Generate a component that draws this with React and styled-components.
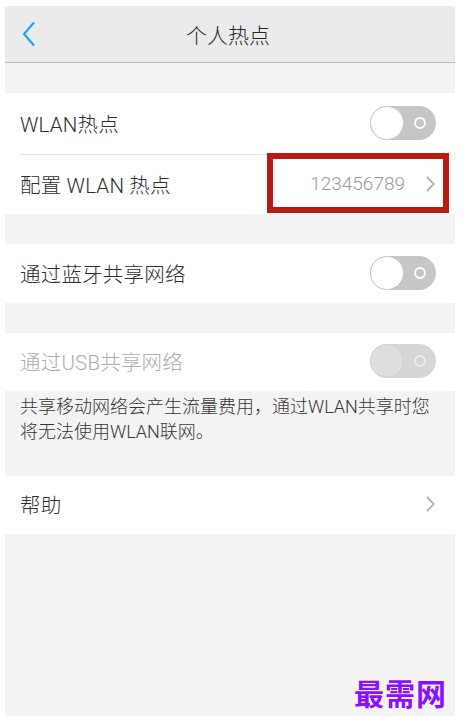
import styled, { createGlobalStyle } from 'styled-components';

const GlobalStyle = createGlobalStyle`
  body {
    margin: 0;
    background: #ffffff;
    font-family: "Roboto", "Noto Sans CJK SC", sans-serif;
    font-weight: 300;
  }
`;

const Screen = styled.div`
  position: relative;
  margin: 6px 0 0 5px;
  width: 450px;
  height: 710px;
  background: #f3f3f3;
  overflow: hidden;
`;

const Header = styled.header`
  box-sizing: border-box;
  height: 57px;
  display: grid;
  grid-template-columns: 60px 1fr 60px;
  align-items: center;
  background: #ebebeb;
  border-bottom: 1.5px solid #b9b9b9;
`;

const BackButton = styled.button`
  border: 0;
  background: none;
  padding: 0 0 0 17px;
  display: flex;
  align-items: center;
  height: 100%;
`;

const Title = styled.h1`
  margin: 0 4px 0 0;
  text-align: center;
  font-size: 21px;
  font-weight: 300;
  color: #262626;
`;

const Gap = styled.div`
  height: ${p => p.$h}px;
`;

const Group = styled.section`
  background: #ffffff;
`;

const Row = styled.div`
  position: relative;
  box-sizing: border-box;
  height: ${p => p.$h || 59}px;
  display: flex;
  align-items: center;
  justify-content: space-between;
  padding: 0 19px 2px 15px;
  ${p => p.$divider && `
    &::after {
      content: "";
      position: absolute;
      left: 15px;
      right: 0;
      bottom: 0;
      height: 1px;
      background: #e3e3e3;
    }
  `}
`;

const Label = styled.span`
  font-size: 20.5px;
  font-weight: 300;
  color: ${p => (p.$muted ? '#adadad' : '#2e2e2e')};
  letter-spacing: 0.2px;
`;

const Trail = styled.div`
  display: flex;
  align-items: center;
  gap: 20px;
`;

const Value = styled.span`
  font-size: 19px;
  color: #9a9a9a;
`;

const Highlight = styled.div`
  position: absolute;
  left: 262px;
  top: -2px;
  width: 182px;
  height: 60px;
  box-sizing: border-box;
  border: 6px solid #bb1a10;
`;

const Track = styled.div`
  position: relative;
  box-sizing: border-box;
  width: 66px;
  height: 34px;
  border-radius: 17px;
  background: ${p => (p.$disabled ? '#d6d6d6' : '#c6c6c6')};
`;

const Knob = styled.div`
  position: absolute;
  left: 0;
  top: 0;
  box-sizing: border-box;
  width: 34px;
  height: 34px;
  border-radius: 50%;
  background: ${p => (p.$disabled ? '#dedede' : '#ffffff')};
  border: 1px solid ${p => (p.$disabled ? '#d0d0d0' : '#c9c9c9')};
`;

const Ring = styled.div`
  position: absolute;
  right: 10px;
  top: 11px;
  box-sizing: border-box;
  width: 12px;
  height: 12px;
  border-radius: 50%;
  border: 2.5px solid ${p => (p.$disabled ? '#ececec' : '#ffffff')};
`;

const Note = styled.p`
  box-sizing: border-box;
  margin: 0;
  height: 85px;
  padding: 3px 22px 0 15px;
  font-size: 18px;
  line-height: 25px;
  color: #363636;
`;

const Watermark = styled.div`
  position: absolute;
  right: 8px;
  bottom: 2px;
  font-family: "Noto Sans CJK SC", sans-serif;
  font-size: 30px;
  font-weight: 700;
  color: #8a10ff;
  letter-spacing: 1px;
`;

const Chevron = () => (
  <svg width="11" height="18" viewBox="0 0 11 18">
    <path d="M2 2l7 7-7 7" fill="none" stroke="#b4b4b4" strokeWidth="1.8" />
  </svg>
);

const Back = () => (
  <svg width="14" height="26" viewBox="0 0 14 26">
    <path d="M12 1.5L2 13l10 11.5" fill="none" stroke="#1ea5eb" strokeWidth="2.2" />
  </svg>
);

const Toggle = ({ disabled }) => (
  <Track $disabled={disabled}>
    <Knob $disabled={disabled} />
    <Ring $disabled={disabled} />
  </Track>
);

const App = () => {
  return (
    <>
      <GlobalStyle />
      <Screen>
        <Header>
          <BackButton><Back /></BackButton>
          <Title>个人热点</Title>
          <span />
        </Header>
        <Gap $h={30} />
        <Group>
          <Row $h={62} $divider>
            <Label>WLAN热点</Label>
            <Toggle />
          </Row>
          <Row $h={59}>
            <Label>配置 WLAN 热点</Label>
            <Trail>
              <Value>123456789</Value>
              <Chevron />
            </Trail>
            <Highlight />
          </Row>
        </Group>
        <Gap $h={30} />
        <Group>
          <Row>
            <Label>通过蓝牙共享网络</Label>
            <Toggle />
          </Row>
        </Group>
        <Gap $h={30} />
        <Group>
          <Row $h={58}>
            <Label $muted>通过USB共享网络</Label>
            <Toggle disabled />
          </Row>
        </Group>
        <Note>共享移动网络会产生流量费用，通过WLAN共享时您将无法使用WLAN联网。</Note>
        <Group>
          <Row $h={58}>
            <Label>帮助</Label>
            <Chevron />
          </Row>
        </Group>
        <Watermark>最需网</Watermark>
      </Screen>
    </>
  );
};

export default App;
